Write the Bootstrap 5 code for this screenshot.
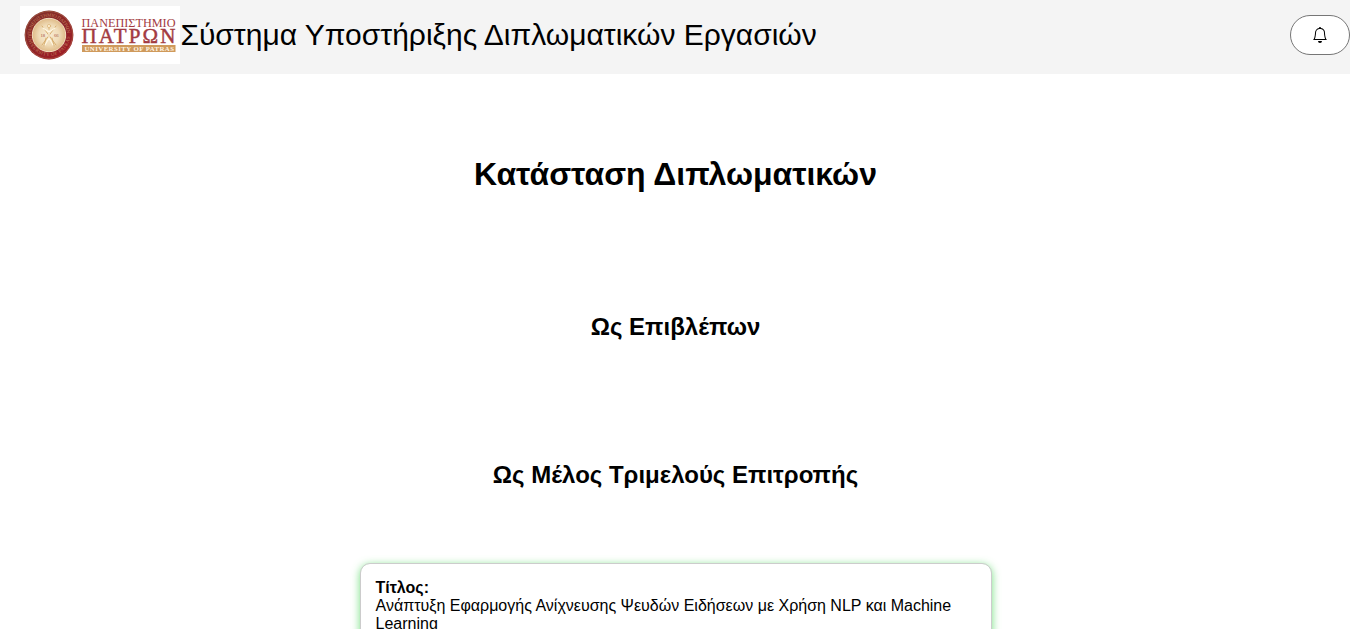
<!DOCTYPE html>
<html lang="el">
<head>
<meta charset="utf-8">
<title>Σύστημα Υποστήριξης Διπλωματικών Εργασιών</title>
<link href="https://cdn.jsdelivr.net/npm/bootstrap@5.3.0/dist/css/bootstrap.min.css" rel="stylesheet">
<style>
  body { font-family: "Liberation Sans", Arial, sans-serif; color: #000; line-height: normal; height: 100vh; }
  .topbar { background: #f4f4f4; height: 74px; padding-left: 20px; }
  .site-logo { width: 160px; height: 58px; margin-top: -4px; }
  .site-title { font-size: 30px; line-height: 37px; margin-top: -6px; margin-left: .4px; white-space: nowrap; }
  .bell-btn { width: 60px; height: 40px; background: #fff; border: 1px solid #767676; margin-top: -4px; color: #000; }
  main { padding-left: 1px; }
  .page-title { font-size: 32px; line-height: 37px; margin: 82px 0 0; }
  .section-title { font-size: 24px; line-height: 28px; margin: 0; }
  .first-section { margin-top: 120px; }
  .second-section { margin-top: 120px; }
  .thesis-card { width: 632px; margin-top: 74px; height: 150px; padding: 15px; border: 1px solid #ccc; border-radius: 10px; background-clip: padding-box; box-shadow: 0 2px 8px rgba(80, 215, 95, .8); font-size: 16px; line-height: 18px; }
</style>
</head>
<body class="overflow-hidden bg-white">
<header class="topbar d-flex align-items-center">
  <svg class="site-logo flex-shrink-0" viewBox="0 0 160 58" role="img" aria-label="Πανεπιστήμιο Πατρών">
    <defs>
      <radialGradient id="seal"><stop offset="0" stop-color="#f8ecd4"/><stop offset=".6" stop-color="#f0dcb8"/><stop offset="1" stop-color="#dfbb88"/></radialGradient>
      <linearGradient id="ring" x1="0" y1="0" x2=".6" y2="1"><stop offset="0" stop-color="#7d3029"/><stop offset="1" stop-color="#9c1c26"/></linearGradient>
      <path id="upper" d="M10.8 29a18.2 18.2 0 0 1 36.4 0"/>
      <path id="lower" d="M8 29a21 21 0 0 0 42 0"/>
    </defs>
    <rect width="160" height="58" fill="#fff"/>
    <circle cx="29" cy="29" r="24.4" fill="url(#ring)"/>
    <circle cx="29" cy="29" r="23.6" fill="none" stroke="#b47b56" stroke-width=".5"/>
    <g font-family="Liberation Serif, serif" font-size="5" fill="#c07c5a">
      <text><textPath href="#upper" textLength="55">ΠΑΝΕΠΙΣΤΗΜΙΟ ΠΑΤΡΩΝ</textPath></text>
      <text><textPath href="#lower" textLength="64">UNIVERSITY OF PATRAS</textPath></text>
    </g>
    <circle cx="29" cy="29" r="16.7" fill="url(#seal)" stroke="#f4dfc0"/>
    <g fill="none" stroke="#d5a968" stroke-width=".9" stroke-linecap="round">
      <path d="M22 20l14 19M36 20L22 39M29 21v12M26 32l-2 8M32 32l2 8"/>
    </g>
    <g fill="none" stroke="#fff8e5" stroke-width="1.1" stroke-linecap="round">
      <path d="M23 22l6 4 6-4M29 24v8l-4 7M29 32l4 7"/><circle cx="29" cy="20" r="1.6" fill="#fff0d2" stroke="#d5a968" stroke-width=".6"/>
    </g>
    <g font-family="Liberation Serif, serif" font-size="4.6" fill="#a34c3a"><text x="20.5" y="30.6">18</text><text x="34" y="30.6">66</text></g>
    <g font-family="Liberation Serif, serif" fill="#a33b42">
      <text x="61.5" y="21.2" font-size="13.4" textLength="94" lengthAdjust="spacingAndGlyphs">ΠΑΝΕΠΙΣΤΗΜΙΟ</text>
      <text x="61.5" y="36.8" font-size="21" textLength="94" stroke="#a33b42" stroke-width=".45">ΠΑΤΡΩΝ</text>
    </g>
    <rect x="62" y="39" width="93.5" height="7" fill="#cf9a5c"/>
    <text x="64.5" y="44.8" font-family="Liberation Serif, serif" font-size="6.8" font-weight="bold" fill="#fff5e4" textLength="89.5">UNIVERSITY OF PATRAS</text>
  </svg>
  <div class="site-title">Σύστημα Υποστήριξης Διπλωματικών Εργασιών</div>
  <button class="bell-btn rounded-pill ms-auto p-0 d-flex align-items-center justify-content-center" type="button" aria-label="Ειδοποιήσεις">
    <svg width="16" height="16" viewBox="0 0 16 16" fill="currentColor"><path d="M8 16a2 2 0 0 0 2-2H6a2 2 0 0 0 2 2zM8 1.918l-.797.161A4.002 4.002 0 0 0 4 6c0 .628-.134 2.197-.459 3.742-.16.767-.376 1.566-.663 2.258h10.244c-.287-.692-.502-1.49-.663-2.258C12.134 8.197 12 6.628 12 6a4.002 4.002 0 0 0-3.203-3.92L8 1.917zM14.22 12c.223.447.481.801.78 1H1c.299-.199.557-.553.78-1C2.68 10.2 3 6.88 3 6c0-2.42 1.72-4.44 4.005-4.901a1 1 0 1 1 1.99 0A5.002 5.002 0 0 1 13 6c0 .88.32 4.2 1.22 6z"/></svg>
  </button>
</header>
<main class="d-flex flex-column align-items-center text-center">
  <h1 class="page-title fw-bold">Κατάσταση Διπλωματικών</h1>
  <h2 class="section-title first-section fw-bold">Ως Επιβλέπων</h2>
  <h2 class="section-title second-section fw-bold">Ως Μέλος Τριμελούς Επιτροπής</h2>
  <article class="thesis-card bg-white text-start">
    <strong class="d-block">Τίτλος:</strong>
    <span>Ανάπτυξη Εφαρμογής Ανίχνευσης Ψευδών Ειδήσεων με Χρήση NLP και Machine Learning</span>
  </article>
</main>
<script src="https://cdn.jsdelivr.net/npm/bootstrap@5.3.0/dist/js/bootstrap.bundle.min.js"></script>
</body>
</html>
